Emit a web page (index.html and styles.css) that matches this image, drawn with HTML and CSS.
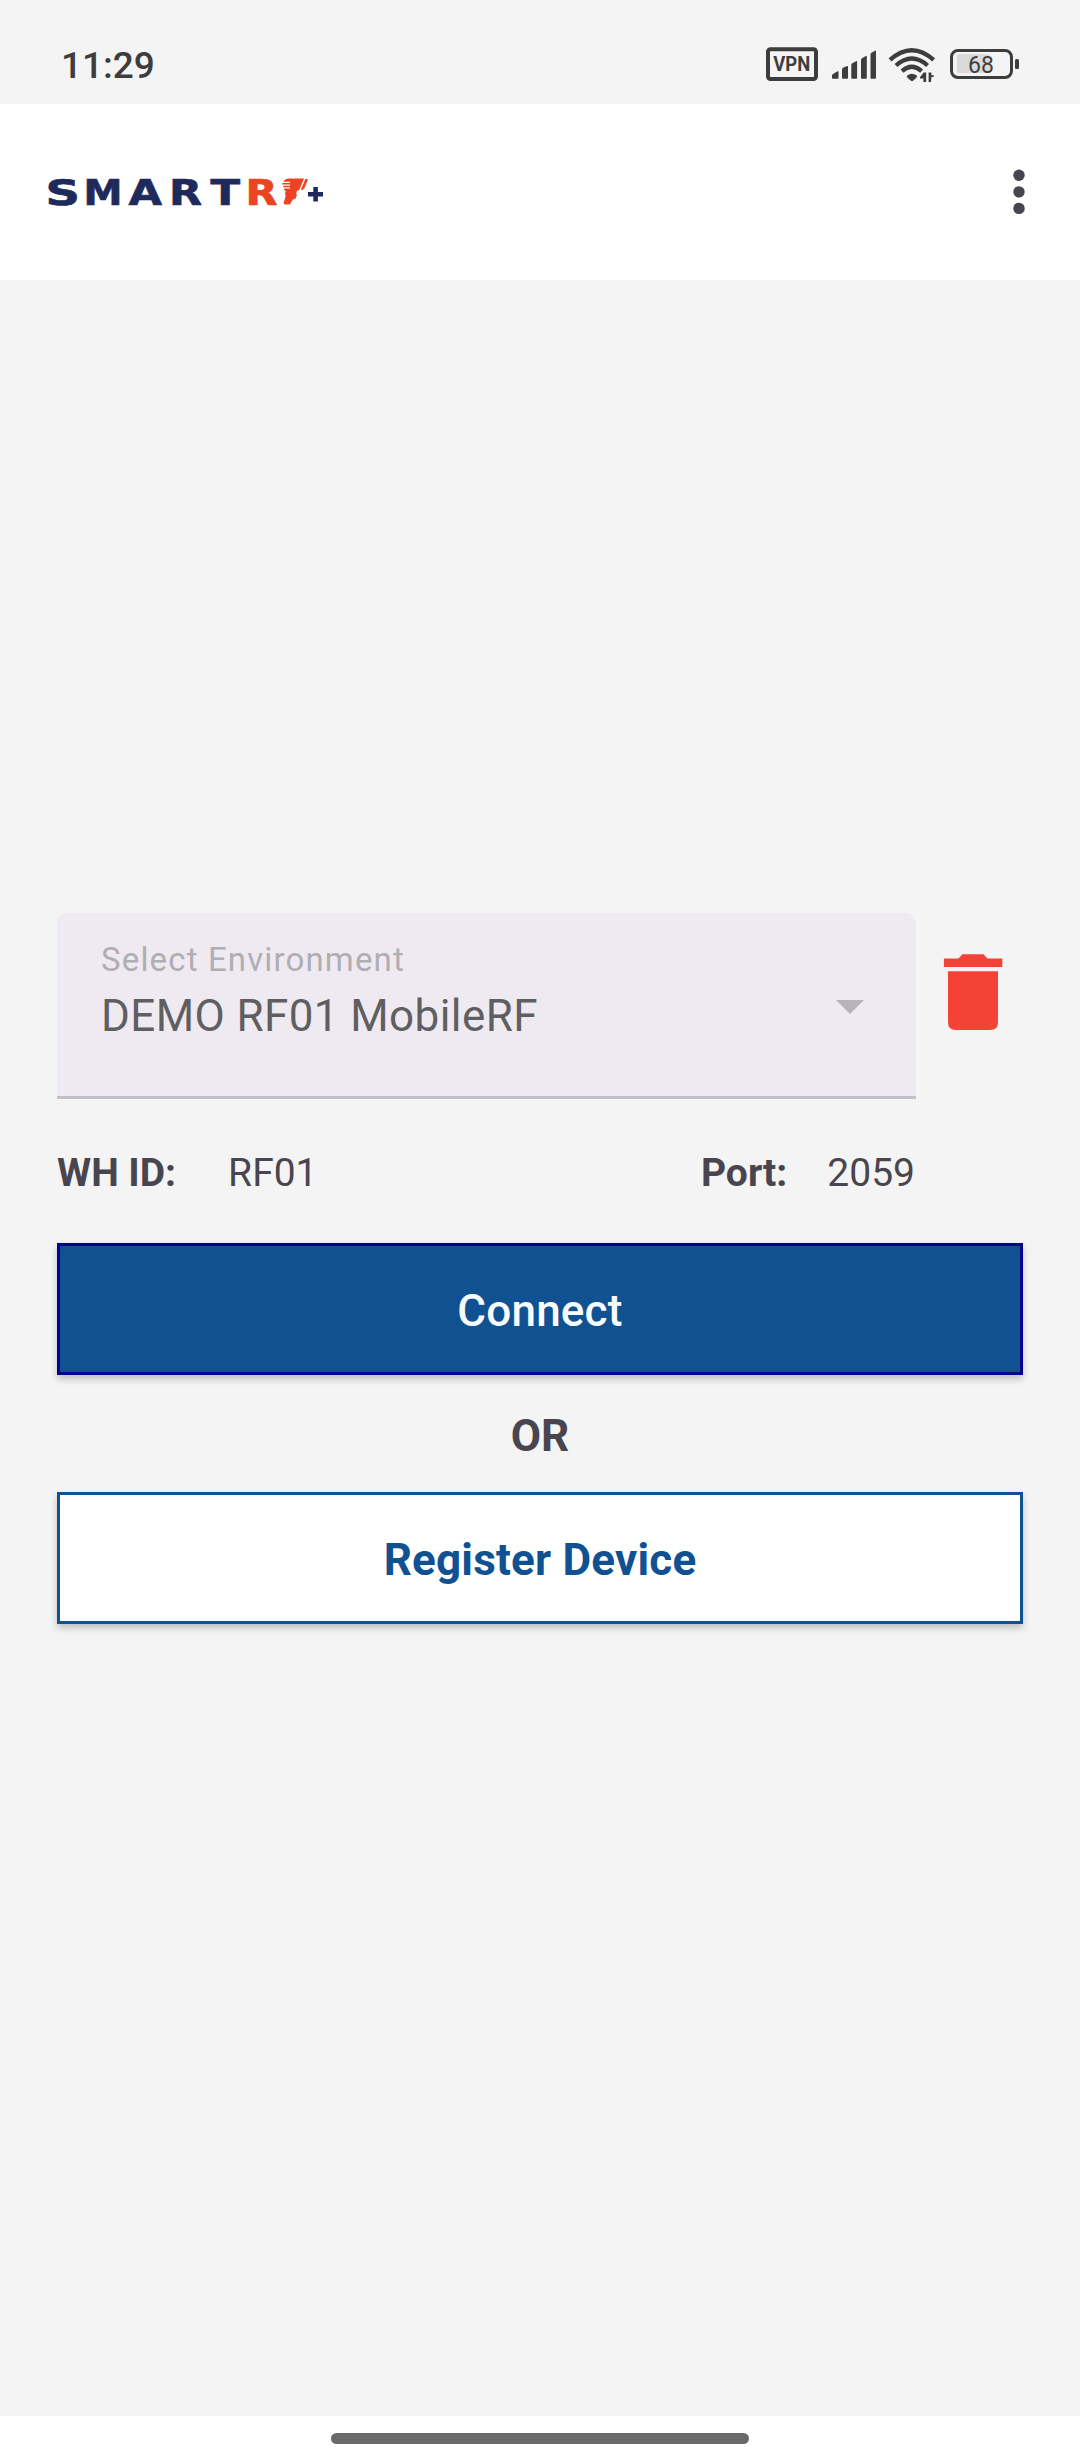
FILE: index.html
```html
<!DOCTYPE html>
<html lang="en">
<head>
<meta charset="utf-8">
<title>SmartRF+</title>
<link rel="stylesheet" href="styles.css">
</head>
<body>
<div class="screen">
  <div class="status">
    <span class="clock">11:29</span>
    <svg class="status-icons" viewBox="760 40 264 50" width="264" height="50">
      <rect x="768" y="49.300" width="48" height="29.700" rx="2.5" fill="none" stroke="#3d3d3d" stroke-width="4"/>
      <text x="773.3" y="71" class="vpn" textLength="37" lengthAdjust="spacingAndGlyphs">VPN</text>
      <g fill="#3d3d3d">
        <path d="M832 78v-2.500q0-1 1-1.500l4.500-2.700q1-.3 1 .7v6q0 .8-.8.8h-4.900q-.8 0-.8-.8z"/>
        <path d="M842 78v-8.500q0-1.200 1-1.700l4-1.700q1-.3 1 .7v11.200q0 .8-.8.8h-4.400q-.8 0-.8-.8z"/>
        <path d="M851.300 78v-13q0-1.200 1-1.800l3.800-2q1-.4 1 .6v16.200q0 .8-.8.8h-4.200q-.8 0-.8-.8z"/>
        <path d="M861 78v-18q0-1.200 1-1.800l3.800-2.100q1-.4 1 .6v21.300q0 .8-.8.8h-4.200q-.8 0-.8-.8z"/>
        <path d="M870.500 78v-23.500q0-1.200 1-1.800l3.500-2q1-.4 1 .6v26.700q0 .8-.8.8h-3.900q-.8 0-.8-.8z"/>
        <path d="M907.500 75.200q4.400-3 8.900 0 1.400 1 .2 2.200l-3.200 3q-1.400 1-2.800 0l-3.300-3q-1.200-1.200.2-2.200z"/>
        <path d="M926.200 72.500v9.500h-2.800v-3.500h-3.400v-1.200l3.600-4.800zM928.600 82v-9.500h2.800v2.800h2.600v1.300l-2.600.6-.4 4.800z"/>
      </g>
      <g fill="none" stroke="#3d3d3d" stroke-width="4.300">
        <path d="M890 59.800Q911.800 40.500 933.600 59.800"/>
        <path d="M896 65.500Q911.800 51.500 927.600 65.500"/>
        <path d="M902 71.200Q911.800 62.500 921.600 71.200"/>
      </g>
      <rect x="957" y="54" width="33" height="19" rx="2" fill="#dadada"/>
      <rect x="951.500" y="50.500" width="60" height="27" rx="6.500" fill="none" stroke="#3d3d3d" stroke-width="3"/>
      <rect x="1015" y="59" width="4" height="10" rx="1.500" fill="#3d3d3d"/>
      <text x="968" y="73" class="charge" textLength="26">68</text>
    </svg>
  </div>

  <header class="appbar">
    <svg class="logo" viewBox="44 172 284 40" width="284" height="40">
      <g class="brand">
        <text x="45.500" y="204.500" textLength="34.500" lengthAdjust="spacingAndGlyphs">S</text>
        <text x="83.500" y="204.500" textLength="39" lengthAdjust="spacingAndGlyphs">M</text>
        <text x="128.500" y="204.500" textLength="33.500" lengthAdjust="spacingAndGlyphs">A</text>
        <text x="169" y="204.500" textLength="33" lengthAdjust="spacingAndGlyphs">R</text>
        <text x="210.500" y="204.500" textLength="29.500" lengthAdjust="spacingAndGlyphs">T</text>
        <text x="245.500" y="204.500" textLength="32" lengthAdjust="spacingAndGlyphs" class="accent">R</text>
      </g>
      <g fill="#ee4323">
        <path d="M284 180.500q2-2 5-2h15l-5 12h-2l-.8 3.200.8 1.200-1.800 4-2.500.5-1.800 3.500q-.8 1.500-2.200 1.500h-3.500q-2 0-1.500-2l2-6.500-.7-2.500.8-2.500-1.600-1-.2-1.300h6v-1.300h-6.800v-1.500h6.800v-1.300h-7.700v-1.500h7.700v-1.300h-6.500z"/>
        <path d="M305.300 179h2q.8.200.5 1l-3.500 8.500-2.200 1.500h-1.300z"/>
      </g>
      <path fill="#1f2a5c" d="M313.300 187h4.600v5h5.100v4.600h-5.100v5h-4.600v-5H308V192h5.300z"/>
    </svg>
    <svg class="more" viewBox="0 0 12 46" width="12" height="46">
      <g fill="#49454f"><circle cx="6" cy="6.300" r="5.700"/><circle cx="6" cy="22.900" r="5.700"/><circle cx="6" cy="39.400" r="5.700"/></g>
    </svg>
  </header>

  <main class="form">
    <div class="environment">
      <div class="select">
        <div class="select-text">
          <span class="label">Select Environment</span>
          <span class="value">DEMO RF01 MobileRF</span>
        </div>
        <svg class="caret" viewBox="0 0 28 14" width="28" height="14"><path d="M0 0h28L14 14z" fill="#b7b5ba"/></svg>
      </div>
      <svg class="trash" viewBox="0 0 60 78" width="60" height="78">
        <path fill="#f44336" d="M.900 5.500h14.600L19.300 1.300h21.200l3.800 4.200h15v8.500H.900zM5 18.300h50v50.900q0 7.800-7.800 7.800H12.800Q5 77 5 69.200z"/>
      </svg>
    </div>
    <div class="details">
      <b>WH ID:</b><span class="wh">RF01</span>
      <b class="port">Port:</b><span class="port-value">2059</span>
    </div>
    <button class="btn connect">Connect</button>
    <div class="or">OR</div>
    <button class="btn register">Register Device</button>
  </main>

  <div class="navbar"><div class="pill"></div></div>
</div>
</body>
</html>
```
FILE: styles.css
```css
body {
  margin: 0;
  background: #f4f4f4;
  font-family: Roboto, sans-serif;
  color: #49454f;
}

.screen {
  display: flex;
  flex-direction: column;
  width: 1080px;
  height: 2460px;
}

.status {
  display: flex;
  justify-content: space-between;
  height: 64px;
  padding: 40px 56px 0 61px;
}

.clock {
  font-size: 37px;
  font-weight: 500;
  line-height: 52px;
  color: #3d3d3d;
}

.vpn {
  font: 700 19.7px Roboto, sans-serif;
  fill: #3d3d3d;
}

.charge {
  font: 400 23px Roboto, sans-serif;
  fill: #3d3d3d;
}

.appbar {
  display: flex;
  align-items: center;
  justify-content: space-between;
  box-sizing: border-box;
  height: 176px;
  padding: 0 55px 0 44px;
  background: #fff;
}

.brand {
  font: 700 35px "DejaVu Sans", sans-serif;
  fill: #1f2a5c;
  stroke: #1f2a5c;
  stroke-width: 0.7px;
}

.brand .accent {
  fill: #ee4323;
  stroke: #ee4323;
}

.form {
  display: flex;
  flex: 1;
  flex-direction: column;
  padding: 633px 57px 0;
}

.environment {
  display: flex;
  gap: 27px;
}

.select {
  display: flex;
  justify-content: space-between;
  box-sizing: border-box;
  width: 859px;
  height: 186px;
  padding: 22px 52px 0 44px;
  background: #efeaf1;
  border-bottom: 3px solid #c4c0c8;
  border-radius: 11px 11px 0 0;
}

.select-text {
  display: flex;
  flex-direction: column;
}

.label {
  font-size: 33px;
  line-height: 50px;
  letter-spacing: 1.15px;
  color: #b0aeb3;
}

.value {
  font-size: 44px;
  line-height: 63px;
  letter-spacing: 0.4px;
  color: #5f5f61;
}

.caret {
  margin-top: 65px;
}

.trash {
  margin-top: 40px;
}

.details {
  display: flex;
  width: 859px;
  height: 52px;
  margin-top: 48px;
  font-size: 39px;
  line-height: 52px;
}

.wh {
  margin-left: 52px;
}

.port {
  margin-left: auto;
  margin-right: 40px;
}

.port-value {
  margin-right: 1px;
}

.btn {
  box-sizing: border-box;
  height: 132px;
  padding: 4px 0 0;
  font-family: inherit;
  font-size: 44px;
  line-height: 122px;
  letter-spacing: 0.2px;
  border: 3px solid #0f5191;
  box-shadow: 0 4px 7px rgba(0, 0, 0, 0.22);
}

.connect {
  margin-top: 44px;
  font-weight: 500;
  color: #f8fbff;
  background: #0f5191;
  border-color: #03038f;
}

.or {
  margin: 36px 0 31px;
  font-size: 44px;
  font-weight: 700;
  line-height: 50px;
  text-align: center;
}

.register {
  font-weight: 700;
  color: #0f5191;
  background: #fff;
}

.navbar {
  display: flex;
  justify-content: center;
  height: 44px;
  background: #fff;
}

.pill {
  width: 418px;
  height: 11px;
  margin-top: 17px;
  background: #6a6a6a;
  border-radius: 6px;
}
```
